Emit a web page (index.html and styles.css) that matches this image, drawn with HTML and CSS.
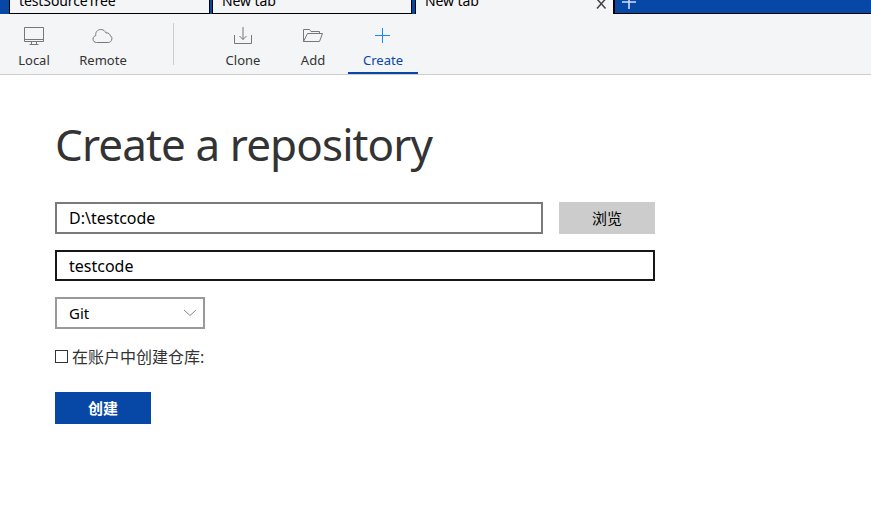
FILE: index.html
```html
<!DOCTYPE html>
<html lang="en">
<head>
<meta charset="utf-8">
<title>Create a repository</title>
<link rel="stylesheet" href="styles.css">
</head>
<body>
<div class="tabs">
  <div class="tab first"><span class="label">testSourceTree</span></div>
  <div class="tab"><span class="label">New tab</span></div>
  <div class="tab active"><span class="label">New tab</span>
    <svg class="close" width="11" height="14" viewBox="0 0 11 14"><path d="M1 -1L9.5 8.5M9.5 -1L1 8.5" fill="none" stroke="#444" stroke-width="1.5"/></svg>
  </div>
  <div class="new"><svg width="16" height="13" viewBox="0 0 16 13"><path d="M0 2H14M7 -5V9" fill="none" stroke="#d3def0" stroke-width="1.6"/></svg></div>
</div>
<nav class="toolbar">
  <div class="tool local">
    <svg width="24" height="24" viewBox="0 0 24 24"><path d="M2.5 3.5H21.5V17.5H2.5ZM2.5 15.5H21.5M9.5 18V20M14.5 18V20M7.5 20.5H16.5"/></svg>
    <span class="t-local">Local</span>
  </div>
  <div class="tool remote">
    <svg width="24" height="24" viewBox="0 0 24 24"><path d="M5.5 18.5C3.5 18.5 2 17 2 15C2 13 3.4 11.9 4.8 11.7C4.2 8.5 6.2 5.5 9.8 5.5C12.5 5.5 14.2 7 15 9C17.6 8.5 19 10 19 11.6C20.5 12.2 21 13.4 20.9 14.8C20.7 17.2 19 18.5 17.3 18.5Z"/></svg>
    <span class="t-remote">Remote</span>
  </div>
  <div class="divider"></div>
  <div class="tool clone">
    <svg width="24" height="24" viewBox="0 0 24 24"><path d="M3.5 11V19.5H20.5V11M12 3V15.5M8.5 12L12 15.5L15.5 12"/></svg>
    <span class="t-clone">Clone</span>
  </div>
  <div class="tool add">
    <svg width="24" height="24" viewBox="0 0 24 24"><path d="M2.5 17.5V5.5H8.5L10 7.5H18.5V9.5M2.5 17.5L6.5 9.5H21.5L18.5 17.5Z"/></svg>
    <span class="t-add">Add</span>
  </div>
  <div class="tool create">
    <svg width="24" height="24" viewBox="0 0 24 24"><path d="M4 11.5H19M11.5 4V19"/></svg>
    <span class="t-create">Create</span>
  </div>
</nav>
<main>
  <h1>Create a repository</h1>
  <div class="row">
    <div class="field path"><span>D:\testcode</span></div>
    <div class="button browse">浏览</div>
  </div>
  <div class="field name"><span>testcode</span></div>
  <div class="field type"><span class="git">Git</span>
    <svg width="14" height="8" viewBox="0 0 14 8"><path d="M1 1L7 6.5L13 1" fill="none" stroke="#888"/></svg>
  </div>
  <label class="check"><i></i><span>在账户中创建仓库:</span></label>
  <div class="button submit">创建</div>
</main>
</body>
</html>
```
FILE: styles.css
```css
* { box-sizing: border-box; }
body {
  margin: 0;
  height: 528px;
  overflow: hidden;
  background: #fff;
  color: #000;
  font-family: "Noto Sans", "Noto Sans CJK SC", sans-serif;
}
svg { display: block; flex: none; }
span { white-space: nowrap; }
.tabs {
  display: flex;
  height: 14px;
  padding-left: 9px;
  background: #0747a6;
  overflow: hidden;
}
.tab {
  display: flex;
  justify-content: space-between;
  width: 200px;
  height: 14px;
  margin-right: 3px;
  padding: 0 6px 0 9px;
  background: #f4f5f7;
  border: solid #000;
  border-width: 0 1px 1px;
  font-size: 14px;
  line-height: 20px;
}
.tab.first { width: 201px; margin-right: 2px; }
.tab .label { margin-top: -9px; letter-spacing: -0.1px; }
.tab.active { border-bottom: 0; width: 199px; margin-right: 0; }
.new {
  flex: 1;
  padding-left: 7px;
  border: solid #000;
  border-width: 0 0 1px 1px;
}
.toolbar {
  display: flex;
  height: 61px;
  background: #f4f5f7;
  border-bottom: 1px solid #ccc;
}
.tool {
  display: flex;
  flex-direction: column;
  align-items: center;
  width: 70px;
  height: 60px;
  padding-top: 10px;
  font-size: 13px;
  line-height: 18px;
  color: #333;
}
.tool svg { fill: none; stroke: #777; margin-bottom: 3px; }
.local { width: 68px; }
.divider { width: 1px; height: 42px; margin: 9px 34px 0 35px; background: #ccc; }
.create { color: #0747a6; border-bottom: 2px solid #0747a6; }
.create svg { stroke: #1f86f5; }
main { padding: 39px 0 0 55px; }
h1 {
  margin: 0 0 28px;
  height: 60px;
  font-size: 44px;
  line-height: 60px;
  font-weight: 400;
  letter-spacing: -0.9px;
  color: #333;
  white-space: nowrap;
}
.row { display: flex; gap: 16px; margin-bottom: 16px; }
.field {
  display: flex;
  align-items: center;
  height: 32px;
  padding: 0 12px;
  border: 2px solid #7a7a7a;
  font-size: 16px;
  line-height: 24px;
}
.path { width: 488px; }
.name { width: 600px; height: 31px; border-color: #171717; margin-bottom: 16px; }
.type { width: 150px; justify-content: space-between; padding-right: 6px; border-color: #999; font-size: 15px; }
.button {
  width: 96px;
  height: 32px;
  text-align: center;
  font-size: 15px;
  line-height: 32px;
}
.browse { background: #ccc; }
.submit { background: #0747a6; color: #fff; font-weight: 700; }
.check {
  display: flex;
  align-items: center;
  height: 24px;
  margin: 15px 0 24px;
  font-size: 16px;
  color: #333;
}
.check i { width: 13px; height: 13px; margin-right: 4px; border: 1px solid #333; }
```
